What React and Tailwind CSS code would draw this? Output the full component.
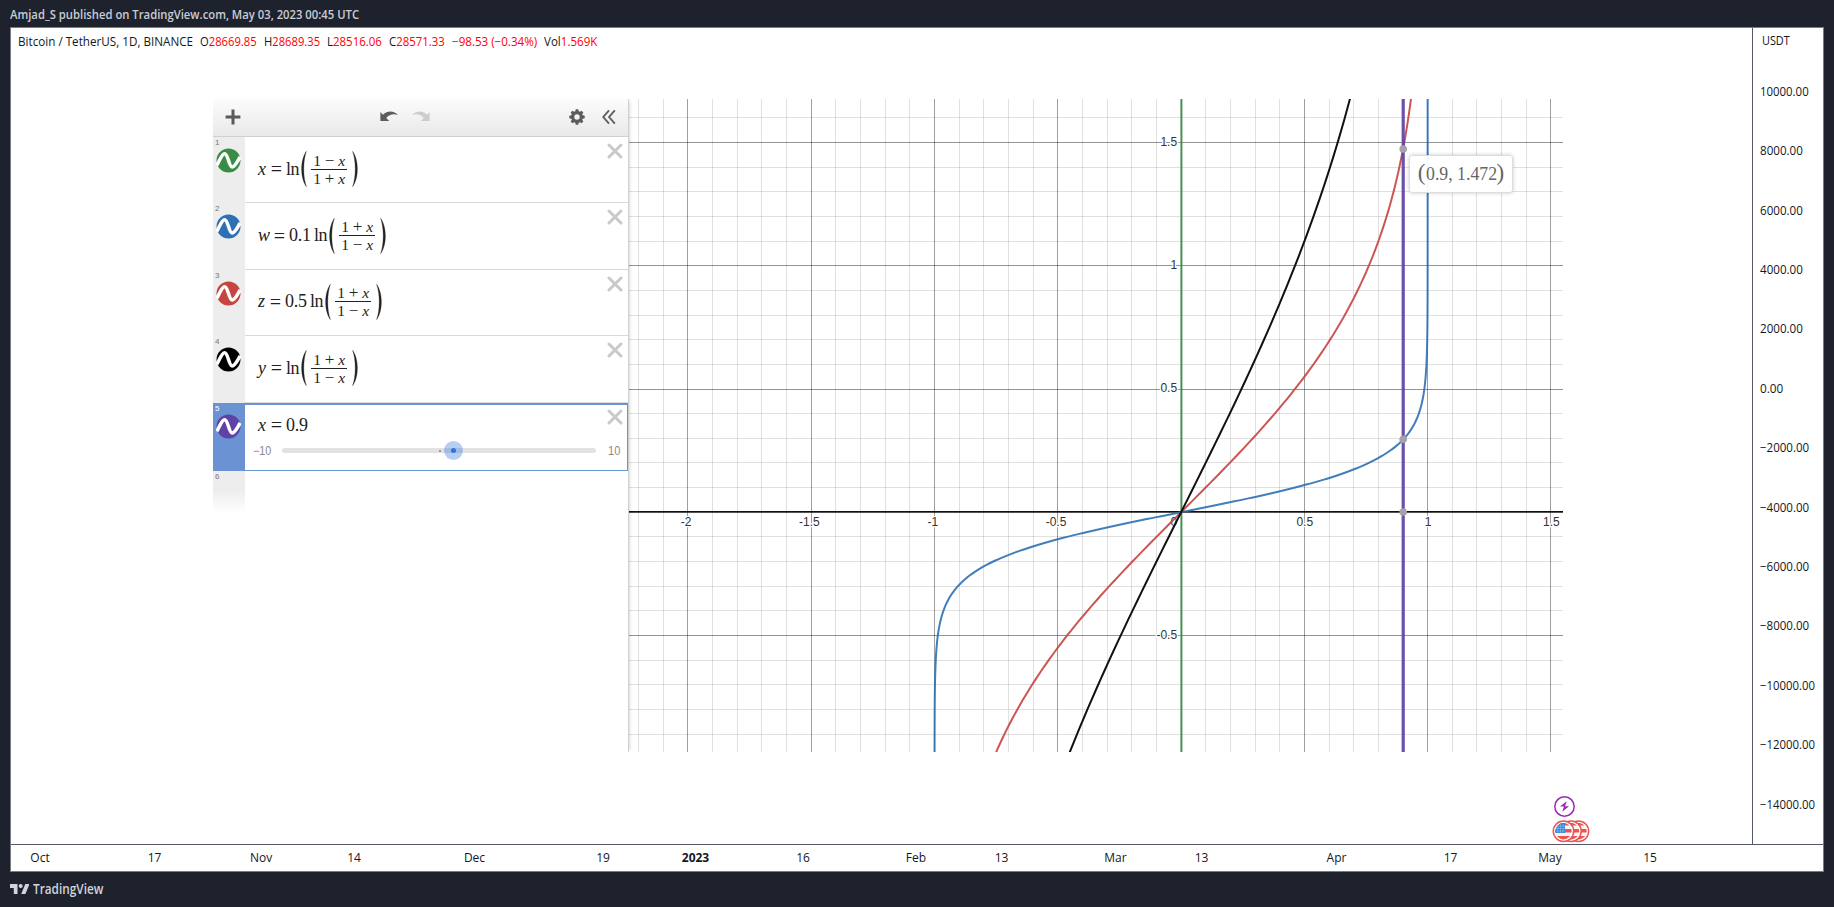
import React from "react";

const UI = "font-['Open_Sans','Noto_Sans',sans-serif] [font-stretch:91%]";
const MATH = "font-['Liberation_Serif',serif]";

/* Squeezes one line of text to a set advance width. */
function Fit({ w, children }) {
  const ref = React.useRef(null);
  const [s, setS] = React.useState(1);
  React.useLayoutEffect(() => {
    const measure = () => {
      if (ref.current) setS(w / ref.current.offsetWidth);
    };
    measure();
    document.fonts?.ready.then(measure);
  }, [w]);
  return (
    <span className="inline-block whitespace-pre" style={{ width: w }}>
      <span ref={ref} className="inline-block origin-left whitespace-pre" style={{ transform: `scaleX(${s})` }}>
        {children}
      </span>
    </span>
  );
}

/* ---------- header ---------- */
const quotes = [
  ["O", "28669.85", 57],
  ["H", "28689.35", 56],
  ["L", "28516.06", 54.5],
  ["C", "28571.33", 56],
];

function Legend() {
  return (
    <div className="flex h-[27px] items-center gap-[7px] whitespace-pre pl-[7px] text-[12px] leading-[16px] text-[#131722]">
      <Fit w={175}>Bitcoin / TetherUS, 1D, BINANCE</Fit>
      {quotes.map(([k, v, w]) => (
        <Fit key={k} w={w}>
          {k}
          <span className="text-[#ff0000]">{v}</span>
        </Fit>
      ))}
      <span className="text-[#ff0000]">
        <Fit w={85}>−98.53 (−0.34%)</Fit>
      </span>
      <Fit w={53}>
        Vol<span className="text-[#ff0000]">1.569K</span>
      </Fit>
    </div>
  );
}

/* ---------- expression list ---------- */
function Wave({ color }) {
  return (
    <svg className="block h-[25px] w-[25px]" viewBox="0 0 25 25">
      <circle cx="12.5" cy="12.5" r="12" fill={color} />
      <path d="M0.8 17.2C3.4 13.4 5.6 5.8 8.6 5.8C12.2 5.8 12.8 19 16.2 19C19 19 21.4 13.4 24.2 9" fill="none" stroke="#fff" strokeWidth="3.5" />
    </svg>
  );
}

function Close() {
  return (
    <svg className="block h-[16px] w-[16px]" viewBox="0 0 16 16">
      <path d="M2 2L14 14M14 2L2 14" stroke="#c9c9c9" strokeWidth="3" strokeLinecap="round" />
    </svg>
  );
}

function Paren({ flip }) {
  return (
    <svg className={flip ? "ml-[5px] h-[36px] w-[6px] -scale-x-100" : "mr-[4px] ml-[2px] h-[36px] w-[6px]"} viewBox="0 0 6 36">
      <path d="M5.4 0.3C-1 9 -1 27 5.4 35.7C1.9 26 1.9 10 5.4 0.3Z" fill="#222" stroke="#222" strokeWidth="0.3" />
    </svg>
  );
}

function Frac({ top, bottom }) {
  const part = (op) => (
    <span className="flex h-[17px] items-center justify-between px-[2px] text-[15.5px] leading-[17px]">
      <span>1</span>
      <span className="text-[17px]">{op}</span>
      <i>x</i>
    </span>
  );
  return (
    <span className="flex w-[36px] flex-col">
      {part(top)}
      <span className="h-px bg-[#222]" />
      {part(bottom)}
    </span>
  );
}

const rows = [
  { n: 1, color: "#388c46", v: "x", k: "", vw: 9, kw: 0, top: "−", bottom: "+" },
  { n: 2, color: "#2d70b3", v: "w", k: "0.1", vw: 12, kw: 23, top: "+", bottom: "−" },
  { n: 3, color: "#c74440", v: "z", k: "0.5", vw: 8, kw: 23, top: "+", bottom: "−" },
  { n: 4, color: "#000000", v: "y", k: "", vw: 9, kw: 0, top: "+", bottom: "−" },
];

function Row({ r }) {
  return (
    <div className="flex h-[66.4px]">
      <div className="w-[32px] bg-[#ededed] pl-[2px] pt-[1px]">
        <div className="font-['Liberation_Sans',sans-serif] text-[8px] leading-[10px] text-[#777]">{r.n}</div>
        <div className="pl-[1px]">
          <Wave color={r.color} />
        </div>
      </div>
      <div className="flex flex-1 border-b border-[#d9d9d9]">
        <div className={`${MATH} flex flex-1 items-center pl-[13px] pb-[1px] text-[18px] text-[#222]`}>
          <i style={{ width: r.vw }}>{r.v}</i>
          <span className="ml-[2px] w-[15px] text-center text-[20px]">=</span>
          {r.k ? <span className="ml-[2px] tracking-[-0.2px]" style={{ width: r.kw }}>{r.k}</span> : null}
          <span className="ml-[2px] text-[18px] tracking-[-0.4px]">ln</span>
          <Paren />
          <Frac top={r.top} bottom={r.bottom} />
          <Paren flip />
        </div>
        <div className="pr-[5px] pt-[6px]">
          <Close />
        </div>
      </div>
    </div>
  );
}

function Toolbar() {
  return (
    <div className="flex h-[38px] items-center border-b border-[#cfcfcf] bg-linear-to-b from-[#fcfcfc] to-[#e9e9e9] pb-[2px]">
      <svg className="ml-[12px] h-[16px] w-[16px]" viewBox="0 0 16 16">
        <path d="M8 0.6V15.4M0.6 8H15.4" stroke="#5a5a5a" strokeWidth="3" />
      </svg>
      <svg className="ml-[139px] h-[11px] w-[18px]" viewBox="0 0 18 11">
        <path d="M0.4 1L3 3.7C7.5 -0.8 14 -0.6 18 4C14 2.4 9.5 3 6.2 6.9L9.2 10H0.4Z" fill="#5c5c5c" />
      </svg>
      <svg className="ml-[14px] h-[11px] w-[18px] -scale-x-100" viewBox="0 0 18 11">
        <path d="M0.4 1L3 3.7C7.5 -0.8 14 -0.6 18 4C14 2.4 9.5 3 6.2 6.9L9.2 10H0.4Z" fill="#cdcdcd" />
      </svg>
      <svg className="ml-[139px] h-[16px] w-[16px]" viewBox="-8 -8 16 16">
        <circle r="4.3" fill="none" stroke="#5c5c5c" strokeWidth="3.2" />
        {[0, 45, 90, 135, 180, 225, 270, 315].map((a) => (
          <path key={a} d="M-1.9 -4.8L-1.3 -7.7H1.3L1.9 -4.8Z" fill="#5c5c5c" transform={`rotate(${a})`} />
        ))}
      </svg>
      <svg className="ml-[17px] h-[16px] w-[14px]" viewBox="0 0 14 16">
        <path d="M7 1.3L1.3 8L7 14.7M12.8 1.3L7.1 8L12.8 14.7" fill="none" stroke="#606060" strokeWidth="1.9" />
      </svg>
    </div>
  );
}

function Expressions() {
  return (
    <div className="h-[653px] w-[416px] border-r border-[#cfcfcf] bg-white shadow-[3px_0_3px_-2px_rgba(0,0,0,0.15)]">
      <Toolbar />
      {rows.map((r) => (
        <Row key={r.n} r={r} />
      ))}
      <div className="flex h-[68px] w-[415px]">
        <div className="w-[31px] bg-[#6b93d3] pl-[2px] pt-[1px]">
          <div className="font-['Liberation_Sans',sans-serif] text-[8px] leading-[10px] text-white">5</div>
          <div className="pl-[1px]">
            <Wave color="#6042a6" />
          </div>
        </div>
        <div className="flex flex-1 flex-col border border-t-2 border-[#6b93d3]">
          <div className="flex h-[40px]">
            <div className={`${MATH} flex flex-1 items-center pl-[13px] pt-[1px] text-[18px] text-[#222]`}>
              <i className="w-[9px]">x</i>
              <span className="ml-[2px] w-[15px] text-center text-[20px]">=</span>
              <span className="ml-[2px] text-[18px] tracking-[-0.3px]">0.9</span>
            </div>
            <div className="pr-[4px] pt-[4px]">
              <Close />
            </div>
          </div>
          <div className="flex h-[12px] items-center font-['Liberation_Sans',sans-serif] text-[12px] text-[#8a8a8a]">
            <span className="w-[37px] pl-[8px]"><Fit w={18}>−10</Fit></span>
            <span className="relative h-[5px] w-[314px] rounded-full bg-[#e2e2e2]">
              <span className="absolute left-[157px] top-[1.5px] h-[2px] w-[2px] bg-[#999]" />
              <span className="absolute left-[162px] top-[-7px] flex h-[19px] w-[19px] items-center justify-center rounded-full bg-[#2f72dc]/35">
                <span className="h-[5px] w-[5px] rounded-full bg-[#2f72dc]" />
              </span>
            </span>
            <span className="pl-[12px]"><Fit w={12}>10</Fit></span>
          </div>
        </div>
      </div>
      <div className="h-[42px] w-[32px] bg-linear-to-b from-[#ededed] from-45% to-white pl-[2px] pt-[1px] font-['Liberation_Sans',sans-serif] text-[8px] leading-[10px] text-[#777]">
        6
      </div>
    </div>
  );
}

/* ---------- graph ---------- */
const U = 246.57;
const OX = 552.1;
const OY = 413.2;
const GW = 934;
const GH = 653;
const snap = (v) => Math.floor(v) + 0.5;

function curve(k) {
  let d = "";
  for (let t = -18; t <= 18; t += 0.04) {
    const x = Math.tanh(t / 2);
    const y = k * t;
    const py = OY - y * U;
    if (py < -30 || py > GH + 30) continue;
    d += `${d ? "L" : "M"}${(OX + x * U).toFixed(2)} ${py.toFixed(2)}`;
  }
  return d;
}

const range = (a, b) => Array.from({ length: b - a + 1 }, (_, i) => a + i);

function Graph() {
  const dotX = OX + 0.9 * U + 0.2;
  return (
    <svg className="block h-[653px] w-[934px]" viewBox={`0 0 ${GW} ${GH}`}>
      {range(-22, 15).map((i) => (
        <path key={i} d={`M${snap(OX + (i * U) / 10)} 0V${GH}`} stroke="#000" strokeOpacity={i % 5 ? 0.12 : 0.38} />
      ))}
      {range(-9, 16).map((i) => (
        <path key={i} d={`M0 ${snap(OY + 0.1 - (i * U) / 10)}H${GW}`} stroke="#000" strokeOpacity={i % 5 ? 0.12 : 0.42} />
      ))}
      <path d={`M0 412.8H${GW}`} stroke="#111" strokeWidth="1.5" />
      <g fontFamily="Liberation Sans, Arial, sans-serif" fontSize="12" fill="#333" stroke="#fff" strokeWidth="2.5" strokeLinejoin="round" paintOrder="stroke">
        {[[-2, "-2"], [-1.5, "-1.5"], [-1, "-1"], [-0.5, "-0.5"], [0.5, "0.5"], [1, "1"], [1.5, "1.5"]].map(([x, l]) => (
          <text key={l} x={OX + x * U + (x < 0 ? -1.8 : 0.4)} y="427" textAnchor="middle">{l}</text>
        ))}
        {[[1.5, "1.5"], [1, "1"], [0.5, "0.5"], [-0.5, "-0.5"]].map(([y, l]) => (
          <text key={l} x={OX - 4} y={OY - y * U + 3.5} textAnchor="end">{l}</text>
        ))}
        <text x={OX - 4} y="427" textAnchor="end">0</text>
      </g>
      <path d={`M${OX + 0.3} 0V${GH}`} stroke="#388c46" strokeOpacity="0.9" strokeWidth="2" />
      <g fill="none">
        <path d={curve(0.1)} stroke="#2d70b3" strokeOpacity="0.9" strokeWidth="2" />
        <path d={curve(0.5)} stroke="#c74440" strokeOpacity="0.9" strokeWidth="2" />
        <path d={curve(1)} stroke="#111" strokeWidth="2" />
        <path d={`M${dotX} 0V${GH}`} stroke="#6042a6" strokeOpacity="0.92" strokeWidth="3.2" />
      </g>
      {[50, 340.3, 413].map((y) => (
        <circle key={y} cx={dotX} cy={y} r="3.8" fill="#a5a3a8" />
      ))}
    </svg>
  );
}

/* ---------- axes ---------- */
const dates = [
  [40, "Oct"], [154.5, "17"], [261, "Nov"], [354, "14"], [474.5, "Dec"], [603, "19"], [695.5, "2023"], [803, "16"],
  [916, "Feb"], [1001.5, "13"], [1115.5, "Mar"], [1201.5, "13"], [1336.5, "Apr"], [1450.5, "17"], [1550, "May"], [1650, "15"],
];

function TimeAxis() {
  return (
    <div className="flex h-[26px] w-[1741px] items-center text-[12px] text-[#131722]">
      {dates.map(([x, l], i) => (
        <span
          key={x}
          className={l === "2023" ? "flex w-0 justify-center font-bold" : "flex w-0 justify-center"}
          style={{ marginLeft: x - (i ? dates[i - 1][0] : 11) }}
        >
          {l}
        </span>
      ))}
    </div>
  );
}

function PriceAxis() {
  return (
    <div className="flex w-[71px] flex-col border-l border-[#555866] pl-[7px] text-[12px] text-[#131722]">
      <div className="h-[34.2px] shrink-0 pl-[2px] leading-[26px]"><Fit w={28}>USDT</Fit></div>
      {range(0, 12).map((i) => {
        const v = 10000 - i * 2000;
        const s = (v < 0 ? "−" : "") + Math.abs(v).toFixed(2);
        return (
          <div key={i} className="flex h-[59.4px] shrink-0 items-center">
            <Fit w={Math.abs(v) >= 10000 ? (v < 0 ? 55 : 48.5) : v === 0 ? 23.5 : v < 0 ? 49 : 42.5}>{s}</Fit>
          </div>
        );
      })}
    </div>
  );
}

function Flag() {
  return (
    <svg className="block h-[23px] w-[38px]" viewBox="0 0 38 23">
      <defs>
        <clipPath id="disc"><circle cx="11.5" cy="11.3" r="8.2" /></clipPath>
      </defs>
      {[15, 7.5, 0].map((x) => (
        <g key={x} transform={`translate(${x} 0)`}>
          <circle cx="11.5" cy="11.3" r="10.2" fill="#fff" stroke="#ef5350" strokeWidth="1.5" />
          <g clipPath="url(#disc)">
            <path d="M0 0H23V23H0Z" fill="#f5f5f5" />
            <path d="M0 3H23V5.6H0ZM0 9H23V12.6H0ZM0 16H23V20H0Z" fill="#ef5350" />
            <path d="M0 0H13V13H0Z" fill="#2f83d6" />
            <path d="M4 6H13M4 8.5H13M4 11H13M6 4V13M8.5 4V13M11 4V13" stroke="#8cc0ee" strokeWidth="0.6" />
          </g>
        </g>
      ))}
    </svg>
  );
}

export default function App() {
  return (
    <div className={`${UI} flex h-[907px] w-[1834px] flex-col overflow-hidden bg-[#1e222d] px-[10px]`}>
      <header className="flex h-[27px] items-center pt-[3px] text-[12.5px] font-semibold text-[#c9ccd6]">
        <Fit w={349}>Amjad_S published on TradingView.com, May 03, 2023 00:45 UTC</Fit>
      </header>
      <main className="flex h-[845px] w-[1814px] flex-col border border-[#787b86] bg-white">
        <div className="flex h-[817px] shrink-0 border-b border-[#555866]">
          <section className="w-[1741px]">
            <Legend />
            <div className="mt-[44px] ml-[202px] flex">
              <Expressions />
              <div className="relative">
                <Graph />
                <div className="absolute left-[780px] top-[56px] flex h-[38px] w-[104px] items-center justify-center rounded-[3px] border border-[#dddddd] bg-white/95 text-[18px] text-[#666] shadow-[0_0_4px_rgba(0,0,0,0.2)]">
                  <span className={`${MATH} flex items-center`}>
                    <span className="pb-[3px] text-[23px] leading-none">(</span>
                    <Fit w={71}>0.9, 1.472</Fit>
                    <span className="pb-[3px] text-[23px] leading-none">)</span>
                  </span>
                </div>
              </div>
            </div>
            <div className="mt-[44px] ml-[1541px] flex flex-col">
              <svg className="ml-[2px] h-[21px] w-[21px]" viewBox="0 0 21 21">
                <circle cx="10.5" cy="10.5" r="9.7" fill="#fff" stroke="#9c27b0" strokeWidth="1.5" />
                <path d="M12.8 5.2L6 10.6H10L8.2 15.8L15 10.2H11Z" fill="#9c27b0" />
              </svg>
              <div className="mt-[3px]"><Flag /></div>
            </div>
          </section>
          <PriceAxis />
        </div>
        <TimeAxis />
      </main>
      <footer className="flex h-[35px] items-center gap-[4px] pb-[2px] text-[14px] text-[#d1d4dc]">
        <svg className="h-[10px] w-[19px]" viewBox="0 0 19 10">
          <path d="M0 0H7.5V10H3.8V4H0ZM15.3 0H19.5L15.4 10H11.2Z" fill="#d1d4dc" />
          <circle cx="10.7" cy="2" r="2" fill="#d1d4dc" />
        </svg>
        <span className="font-semibold"><Fit w={70}>TradingView</Fit></span>
      </footer>
    </div>
  );
}
